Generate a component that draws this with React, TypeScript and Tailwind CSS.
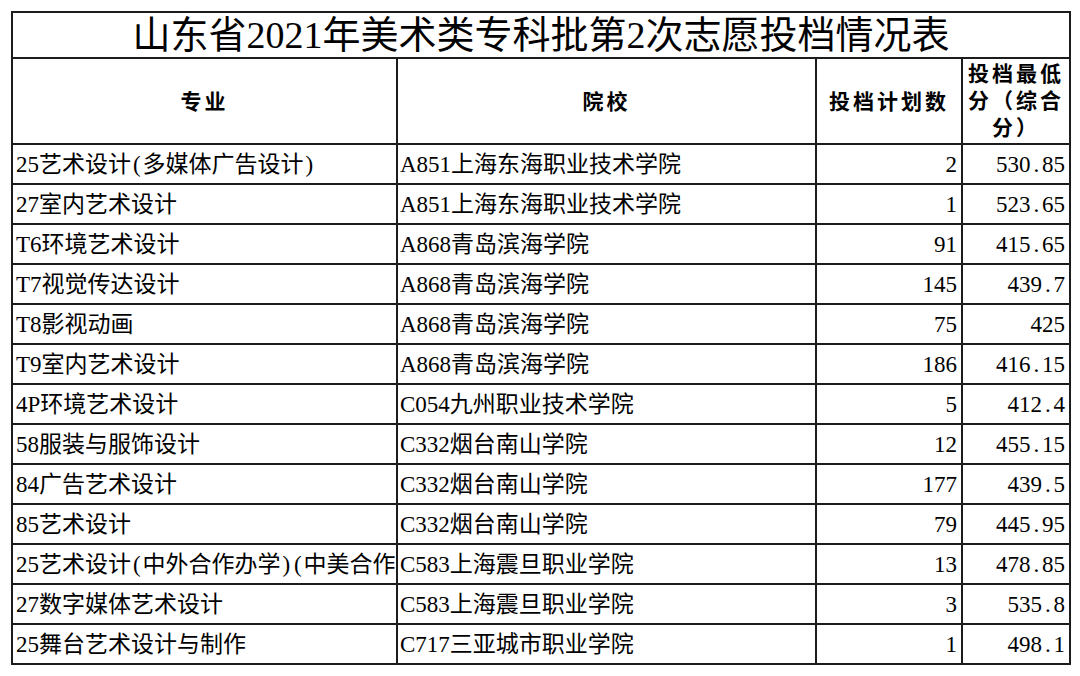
import React from 'react';

type Row = {
  major: string;
  school: string;
  plan: number;
  score: string;
};

const rows: Row[] = [
  { major: '25艺术设计(多媒体广告设计)', school: 'A851上海东海职业技术学院', plan: 2, score: '530.85' },
  { major: '27室内艺术设计', school: 'A851上海东海职业技术学院', plan: 1, score: '523.65' },
  { major: 'T6环境艺术设计', school: 'A868青岛滨海学院', plan: 91, score: '415.65' },
  { major: 'T7视觉传达设计', school: 'A868青岛滨海学院', plan: 145, score: '439.7' },
  { major: 'T8影视动画', school: 'A868青岛滨海学院', plan: 75, score: '425' },
  { major: 'T9室内艺术设计', school: 'A868青岛滨海学院', plan: 186, score: '416.15' },
  { major: '4P环境艺术设计', school: 'C054九州职业技术学院', plan: 5, score: '412.4' },
  { major: '58服装与服饰设计', school: 'C332烟台南山学院', plan: 12, score: '455.15' },
  { major: '84广告艺术设计', school: 'C332烟台南山学院', plan: 177, score: '439.5' },
  { major: '85艺术设计', school: 'C332烟台南山学院', plan: 79, score: '445.95' },
  { major: '25艺术设计(中外合作办学)(中美合作)', school: 'C583上海震旦职业学院', plan: 13, score: '478.85' },
  { major: '27数字媒体艺术设计', school: 'C583上海震旦职业学院', plan: 3, score: '535.8' },
  { major: '25舞台艺术设计与制作', school: 'C717三亚城市职业学院', plan: 1, score: '498.1' },
];

const font = "font-['Liberation_Serif','Noto_Sans_CJK_SC',serif]";
const cell = 'border-2 border-[#1c1c1c] p-0';

// the sheet's song font sets ( ) . in half-width cells; give them the same 0.5em box
function HalfWidth({ text }: { text: string }) {
  const parts: React.ReactNode[] = [];
  let buf = '';
  [...text].forEach((ch, i) => {
    if (ch === '(' || ch === ')' || ch === '.') {
      if (buf) {
        parts.push(buf);
        buf = '';
      }
      parts.push(
        <span key={i} className="inline-block w-[0.5em] text-center">
          {ch}
        </span>
      );
    } else {
      buf += ch;
    }
  });
  if (buf) parts.push(buf);
  return <>{parts}</>;
}

export default function App() {
  return (
    <div className={`min-h-[676px] w-[1080px] bg-white pl-[11px] pt-[11px] text-black ${font}`}>
      <table className="w-[1058px] table-fixed border-collapse">
        <colgroup>
          <col className="w-[385px]" />
          <col className="w-[419px]" />
          <col className="w-[146px]" />
          <col className="w-[108px]" />
        </colgroup>
        <thead>
          <tr className="h-[46px]">
            <th colSpan={4} className={`${cell} text-center align-middle text-[38px] font-normal leading-[44px]`}>
              山东省2021年美术类专科批第2次志愿投档情况表
            </th>
          </tr>
          <tr className="h-[86px]">
            <th className={`${cell} pt-[3px] text-center text-[21px] font-bold tracking-[3px]`}>专业</th>
            <th className={`${cell} pt-[3px] text-center text-[21px] font-bold tracking-[3px]`}>院校</th>
            <th className={`${cell} pt-[3px] text-center text-[21px] font-bold tracking-[3px]`}>投档计划数</th>
            <th className={`${cell} px-[2px] text-center text-[21px] font-bold leading-[27px] tracking-[3px]`}>
              投档最低分（综合分）
            </th>
          </tr>
        </thead>
        <tbody>
          {rows.map((r) => (
            <tr key={r.major + r.school} className="h-[40px]">
              <td className={`${cell} overflow-hidden whitespace-nowrap pl-[3px] pt-[2px] text-[23px]`}>
                <HalfWidth text={r.major} />
              </td>
              <td className={`${cell} overflow-hidden whitespace-nowrap pl-[2px] pt-[2px] text-[23px]`}>
                {r.school}
              </td>
              <td className={`${cell} whitespace-nowrap pr-[4px] pt-[2px] text-right text-[23px]`}>{r.plan}</td>
              <td className={`${cell} whitespace-nowrap pr-[4px] pt-[2px] text-right text-[23px]`}>
                <HalfWidth text={r.score} />
              </td>
            </tr>
          ))}
        </tbody>
      </table>
    </div>
  );
}
